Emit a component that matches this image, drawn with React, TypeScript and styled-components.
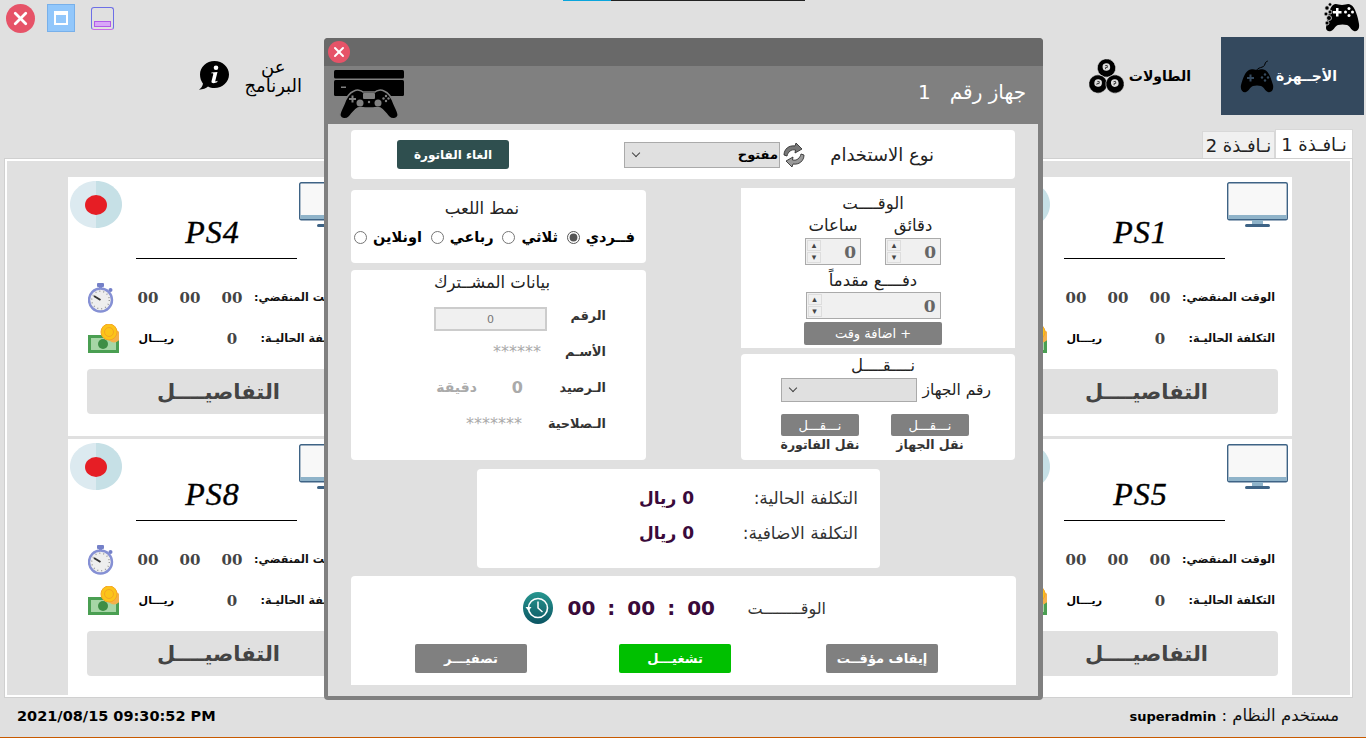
import React from 'react';
import styled, {createGlobalStyle} from "styled-components";
import {X} from "lucide-react";

const GlobalStyle = createGlobalStyle`
    html, body {
        margin: 0;
        padding: 0;
        overflow: hidden;
    }
    * {
        box-sizing: border-box;
    }
    body {
        font-family: "DejaVu Sans", sans-serif;
        color: #222;
    }
`

const PadPath = "M15 2C18 .5 22 1 24 3H36C38 1 42 .5 45 2C50 4 53 9 55 15C57 20 60 24 59 27C58 30 53 31 50 28C47 25 45 21 41 19C38 18 36 19 33 19H27C24 19 22 18 19 19C15 21 13 25 10 28C7 31 2 30 1 27C0 24 3 20 5 15C7 9 10 4 15 2Z"

const ConsoleIcon = () => (
    <svg width="70" height="50" viewBox="0 0 70 50">
        <rect x="0" y="0" width="70" height="8.5" rx="1.5" fill="#000"/>
        <rect x="0" y="10" width="70" height="16" rx="1.5" fill="#000"/>
        <rect x="7" y="16.5" width="5" height="1.5" fill="#808080"/>
        <g transform="translate(5 19)">
            <path d={PadPath} fill="#000" stroke="#808080" strokeWidth="1.5"/>
            <rect x="24" y="4" width="12" height="6" rx="1" fill="#808080"/>
            <path d="M10 9h2.500V6.500h2V9H17v2h-2.500v2.500h-2V11H10z" fill="#808080"/>
            <circle cx="21" cy="14" r="3.500" fill="#808080"/>
            <circle cx="39" cy="14" r="3.500" fill="#808080"/>
            <circle cx="30" cy="13" r="1.200" fill="#808080"/>
            <circle cx="47" cy="7" r="1.200" fill="#808080"/>
            <circle cx="47" cy="12" r="1.200" fill="#808080"/>
            <circle cx="44.500" cy="9.500" r="1.200" fill="#808080"/>
            <circle cx="49.500" cy="9.500" r="1.200" fill="#808080"/>
        </g>
    </svg>
)

const NavPadIcon = () => (
    <svg width="36" height="36" viewBox="0 0 36 36">
        <path d="M17 14c1-6 8-3 9-8 .3-1.600 1.200-2.500 2.800-3" fill="none" stroke="#000" strokeWidth="1"/>
        <path d="M10 12c3-1.500 5 0 8 0s5-1.500 8 0c4 2 6 8 8 15 1 5-2 8-5 7-3-1-4-5-7-6-2.500-.8-5.500-.8-8 0-3 1-4 5-7 6-3 1-6-2-5-7 2-7 4-13 8-15z" fill="#000"/>
        <path d="M8 19h2.500v-2.500h2v2.500H15v2h-2.500v2.500h-2V21H8z" fill="#34495e"/>
        <circle cx="26" cy="16.500" r="1.200" fill="#34495e"/>
        <circle cx="26" cy="22.500" r="1.200" fill="#34495e"/>
        <circle cx="23" cy="19.500" r="1.200" fill="#34495e"/>
        <circle cx="29" cy="19.500" r="1.200" fill="#34495e"/>
    </svg>
)

const LogoIcon = () => (
    <svg width="36" height="30" viewBox="0 0 36 30">
        <path d="M9 3c3-2 5 0 9 0s6-2 9 0c4 2 7 12 8 19 .8 5-2 8-5 7-3-1-4-5-7-6-3-.7-6-.7-9 0-3 1-4 5-7 6-3 1-5-1-5-3 1-8 3-20 7-23z" fill="#000"/>
        <path d="M14 10h3v-3h2.500v3h3v2.500h-3v3H17v-3h-3z" fill="#fff" transform="translate(-5 -1)"/>
        <circle cx="25" cy="6.500" r="1.500" fill="#fff"/>
        <circle cx="25" cy="13.500" r="1.500" fill="#fff"/>
        <circle cx="21.500" cy="10" r="1.500" fill="#fff"/>
        <circle cx="28.500" cy="10" r="1.500" fill="#fff"/>
        <g fill="#000" stroke="#e0e0e0" strokeWidth=".8">
            <circle cx="3" cy="6" r="2.200"/>
            <circle cx="6" cy="2.500" r="1.800"/>
            <circle cx="2" cy="12" r="2"/>
            <circle cx="5" cy="16" r="2.500"/>
            <circle cx="3" cy="21" r="2"/>
            <circle cx="6" cy="10" r="2"/>
        </g>
    </svg>
)

const balls = [
    {cx: 17.5, cy: 9, tilt: -8},
    {cx: 9, cy: 25, tilt: 8},
    {cx: 26, cy: 25, tilt: -12},
]

const BallsIcon = () => (
    <svg width="35" height="35" viewBox="0 0 35 35">
        {balls.map(({cx, cy, tilt}) => (
            <g key={cx} transform={`rotate(${tilt} ${cx} ${cy})`}>
                <circle cx={cx} cy={cy} r="9.200" fill="#000" stroke="#e0e0e0" strokeWidth=".6"/>
                <circle cx={cx} cy={cy - 1} r="3.800" fill="#ddd"/>
                <path d={`M${cx - 1} ${cy - 2.500}h2v2h-2v1.500`} fill="none" stroke="#222" strokeWidth=".8"/>
            </g>
        ))}
    </svg>
)

const InfoIcon = () => (
    <svg width="30" height="30" viewBox="0 0 30 30">
        <path d="M15.500 0C23.500 0 30 6 30 13.500S23.500 27 15.500 27c-2.500 0-4.500-.5-6.500-1.500-2 1.800-5 3-9 3.200 2-1.500 3.500-3.500 4-6C2 20 1 17 1 13.500 1 6 7.500 0 15.500 0z" fill="#000"/>
        <circle cx="17" cy="6.800" r="2.300" fill="#fff"/>
        <path d="M12.500 11.500l6-.6-2.200 8.800c-.2 1 .5 1 2.200 0l-.2 1.300c-2 1.400-6.300 2-5.800-.8l1.700-6.800c.2-1-.3-1.200-1.900-1z" fill="#fff"/>
    </svg>
)

const MonitorIcon = () => (
    <svg width="61" height="46" viewBox="0 0 61 46">
        <rect x=".7" y=".7" width="59.600" height="37" rx="1.500" fill="#f8f8f8" stroke="#3e6385" strokeWidth="1.400"/>
        <rect x="1.400" y="33" width="58.200" height="4" fill="#8fb3c9"/>
        <rect x="25" y="38" width="11" height="4" fill="#8fb3c9"/>
        <rect x="18" y="42" width="25" height="3" rx="1.500" fill="#3e6385"/>
    </svg>
)

const StatusIcon = () => (
    <svg width="52" height="47" viewBox="0 0 52 47">
        <path d="M26 0C11.600 0 0 10.500 0 23.500S11.600 47 26 47z" fill="#dceaf0"/>
        <path d="M26 0c14.400 0 26 10.500 26 23.500S40.400 47 26 47z" fill="#c6e0e6"/>
        <ellipse cx="26" cy="24" rx="11" ry="10" fill="#e61e25"/>
    </svg>
)

const WatchIcon = () => (
    <svg width="26" height="30" viewBox="0 0 26 30">
        <rect x="9" y="0" width="7" height="4" rx="1" fill="#7480c8"/>
        <rect x="11" y="3" width="3" height="3" fill="#7480c8"/>
        <circle cx="22.500" cy="7" r="2" fill="#7480c8"/>
        <circle cx="12.500" cy="17" r="11.500" fill="#eee" stroke="#8590d4" strokeWidth="2.400"/>
        <circle cx="12.500" cy="17" r="8.800" fill="none" stroke="#999" strokeWidth="1.400" strokeDasharray="1 3"/>
        <path d="M12.500 17L6 13" stroke="#333" strokeWidth="2"/>
    </svg>
)

const MoneyIcon = () => (
    <svg width="31" height="30" viewBox="0 0 31 30">
        <rect x="0" y="11" width="31" height="18" fill="#4a9f52"/>
        <rect x="3" y="14" width="25" height="12" fill="#a6d6a6"/>
        <circle cx="15" cy="20" r="5" fill="#3e8e46"/>
        <circle cx="26" cy="12" r="6.500" fill="#f4b04a"/>
        <circle cx="21" cy="8" r="8" fill="#fcc419" stroke="#f5a623"/>
        <circle cx="21" cy="8" r="4.500" fill="none" stroke="#f5a623"/>
    </svg>
)

const ClockIcon = () => (
    <svg width="30" height="32" viewBox="0 0 30 32">
        <defs>
            <linearGradient id="clockFill" x1="0" y1="0" x2="0" y2="1">
                <stop offset="0" stopColor="#27968f"/>
                <stop offset="1" stopColor="#0b5563"/>
            </linearGradient>
        </defs>
        <ellipse cx="15" cy="16" rx="15" ry="16" fill="url(#clockFill)"/>
        <circle cx="15" cy="16" r="9.500" fill="none" stroke="#fff" strokeWidth="1.600"/>
        <path d="M15 9.500V16l4.500 4" fill="none" stroke="#fff" strokeWidth="1.500"/>
        <path d="M2.500 15l3 4 3-4z" fill="#fff"/>
    </svg>
)

const SyncIcon = () => (
    <svg width="24" height="26" viewBox="0 0 24 26">
        <path d="M2 13C2 7 7 3 13 4l1-3 6 6-7 4 .5-3C9 7 6 10 5 14z" fill="#777" stroke="#333" strokeWidth=".9"/>
        <path d="M22 13c0 6-5 10-11 9l-1 3-6-6 7-4-.5 3c4.500 1 7.500-2 8.500-6z" fill="#999" stroke="#333" strokeWidth=".9"/>
    </svg>
)

const Spinner = ({value, wide}: {value: string, wide?: boolean}) => (
    <StyledSpinner $wide={wide}>
        <SpinnerValue>{value}</SpinnerValue>
        <SpinnerArrows>
            <SpinnerArrow>▴</SpinnerArrow>
            <SpinnerArrow>▾</SpinnerArrow>
        </SpinnerArrows>
    </StyledSpinner>
)

const DeviceCard = ({name}: {name: string}) => (
    <StyledCard>
        <StatusBadge><StatusIcon/></StatusBadge>
        <MonitorBadge><MonitorIcon/></MonitorBadge>
        <CardTitle dir="ltr">{name}</CardTitle>
        <CardRow>
            <CardLabel>الوقت المنقضي:</CardLabel>
            <CardValue>00</CardValue>
            <CardValue>00</CardValue>
            <CardValue>00</CardValue>
            <CardIcon><WatchIcon/></CardIcon>
        </CardRow>
        <CardRow>
            <CardLabel>التكلفة الحاليـة:</CardLabel>
            <CardValue>0</CardValue>
            <CardCurrency>ريـــال</CardCurrency>
            <CardIcon><MoneyIcon/></CardIcon>
        </CardRow>
        <DetailsButton>التفاصيــــل</DetailsButton>
    </StyledCard>
)

const modes = ['فــردي', 'ثلاثي', 'رباعي', 'اونلاين']
const devices = ['PS1', 'PS2', 'PS3', 'PS4', 'PS5', 'PS6', 'PS7', 'PS8']

export default function App() {
    return (
        <StyledApp dir="rtl">
            <GlobalStyle/>
            <TopStrip dir="ltr">
                <StripPart $color="#0aa5dc" $width={48}/>
                <StripPart $color="#222" $width={194}/>
            </TopStrip>

            <TitleBar>
                <LogoIcon/>
                <WindowButtons>
                    <CloseButton $size={29}><X size={21} strokeWidth={3.2} color="#fff"/></CloseButton>
                    <MaximizeButton/>
                    <MinimizeButton/>
                </WindowButtons>
            </TitleBar>

            <NavBar>
                <NavItem $active>
                    <span>الأجــهزة</span>
                    <NavPadIcon/>
                </NavItem>
                <NavItem>
                    <span>الطاولات</span>
                    <BallsIcon/>
                </NavItem>
                <AboutItem>
                    <span>عن<br/>البرنامج</span>
                    <InfoIcon/>
                </AboutItem>
            </NavBar>

            <TabRow>
                <Tab $active>نـافـذة 1</Tab>
                <Tab>نـافـذة 2</Tab>
            </TabRow>

            <TabPanel>
                <CardGrid>
                    {devices.map(name => <DeviceCard key={name} name={name}/>)}
                </CardGrid>
            </TabPanel>

            <Footer>
                <UserName>مستخدم النظام : <b>superadmin</b></UserName>
                <DateText dir="ltr">2021/08/15 09:30:52 PM</DateText>
            </Footer>

            <Modal>
                <ModalTitleBar>
                    <CloseButton $size={22}><X size={16} strokeWidth={3} color="#fff"/></CloseButton>
                </ModalTitleBar>
                <ModalHeader>
                    <span>جهاز رقم &nbsp; 1</span>
                    <ConsoleIcon/>
                </ModalHeader>
                <ModalBody>
                    <UsageSection>
                        <SectionLabel>نوع الاستخدام</SectionLabel>
                        <SyncIcon/>
                        <UsageSelectBox>
                            <FormSelect defaultValue="open">
                                <option value="open">مفتوح</option>
                            </FormSelect>
                        </UsageSelectBox>
                        <CancelButton>الغاء الفاتورة</CancelButton>
                    </UsageSection>

                    <MiddleGrid>
                        <Column $gap={6}>
                            <TimeSection>
                                <SectionTitle>الوقــــت</SectionTitle>
                                <TimeFields>
                                    <TimeField>
                                        <SectionTitle>دقائق</SectionTitle>
                                        <Spinner value="0"/>
                                    </TimeField>
                                    <TimeField>
                                        <SectionTitle>ساعات</SectionTitle>
                                        <Spinner value="0"/>
                                    </TimeField>
                                </TimeFields>
                                <PrepayTitle>دفــــع مقدماً</PrepayTitle>
                                <Spinner value="0" wide/>
                                <AddTimeButton>+ اضافة وقت</AddTimeButton>
                            </TimeSection>
                            <TransferSection>
                                <SectionTitle>نــــقــــل</SectionTitle>
                                <TransferRow>
                                    <TransferLabel>رقم الجهاز</TransferLabel>
                                    <TransferSelectBox>
                                        <FormSelect/>
                                    </TransferSelectBox>
                                </TransferRow>
                                <TransferActions>
                                    <TransferAction>
                                        <TransferButton>نـــقـــل</TransferButton>
                                        <TransferCaption>نقل الجهاز</TransferCaption>
                                    </TransferAction>
                                    <TransferAction>
                                        <TransferButton>نـــقـــل</TransferButton>
                                        <TransferCaption>نقل الفاتورة</TransferCaption>
                                    </TransferAction>
                                </TransferActions>
                            </TransferSection>
                        </Column>

                        <Column $gap={7} $top={2}>
                            <ModeSection>
                                <ModeTitle>نمط اللعب</ModeTitle>
                                <ModeRow>
                                    {modes.map((mode, i) => (
                                        <ModeOption key={mode}>
                                            <span>{mode}</span>
                                            <ModeRadio type="radio" name="mode" defaultChecked={i === 0}/>
                                        </ModeOption>
                                    ))}
                                </ModeRow>
                            </ModeSection>
                            <MemberSection>
                                <MemberTitle>بيانات المشــترك</MemberTitle>
                                <MemberRow>
                                    <MemberLabel>الرقم</MemberLabel>
                                    <MemberNumber>0</MemberNumber>
                                </MemberRow>
                                <MemberRow>
                                    <MemberLabel>الأسـم</MemberLabel>
                                    <MemberMuted $inset={6}>******</MemberMuted>
                                </MemberRow>
                                <MemberRow>
                                    <MemberLabel>الـرصيد</MemberLabel>
                                    <MemberMuted $inset={24}>
                                        <b>0</b>
                                        <MemberUnit>دقيقة</MemberUnit>
                                    </MemberMuted>
                                </MemberRow>
                                <MemberRow>
                                    <MemberLabel>الـصلاحية</MemberLabel>
                                    <MemberMuted $inset={25}>*******</MemberMuted>
                                </MemberRow>
                            </MemberSection>
                        </Column>
                    </MiddleGrid>

                    <CostSection>
                        <CostRow>
                            <CostLabel>التكلفة الحالية:</CostLabel>
                            <CostValue>0 ريال</CostValue>
                        </CostRow>
                        <CostRow>
                            <CostLabel>التكلفة الاضافية:</CostLabel>
                            <CostValue>0 ريال</CostValue>
                        </CostRow>
                    </CostSection>

                    <TimerSection>
                        <TimerRow>
                            <TimerLabel>الوقــــــــت</TimerLabel>
                            <TimerDigits dir="ltr">
                                <span>00</span><span>:</span><span>00</span><span>:</span><span>00</span>
                            </TimerDigits>
                            <ClockIcon/>
                        </TimerRow>
                        <TimerActions>
                            <TimerButton>إيقاف مؤقــت</TimerButton>
                            <TimerButton $start>تشغيـــل</TimerButton>
                            <TimerButton>تصفيـــر</TimerButton>
                        </TimerActions>
                    </TimerSection>
                </ModalBody>
            </Modal>
        </StyledApp>
    );
}

const StyledApp = styled.div`
    position: relative;
    width: 1366px;
    height: 738px;
    display: flex;
    flex-direction: column;
    background-color: #e0e0e0;
    border-bottom: 1px solid #c85a00;
    overflow: hidden;
`
const TopStrip = styled.div`
    position: absolute;
    top: 0;
    left: 563px;
    display: flex;
`
const StripPart = styled.div<{$color: string, $width: number}>`
    width: ${props => props.$width}px;
    height: 1px;
    background-color: ${props => props.$color};
`
const TitleBar = styled.div`
    height: 37px;
    flex: none;
    display: flex;
    align-items: flex-start;
    justify-content: space-between;
    padding: 2px 6px 0 6px;
`
const WindowButtons = styled.div`
    display: flex;
    flex-direction: row-reverse;
    align-items: flex-start;
    padding-top: 2px;
`
const CloseButton = styled.div<{$size: number}>`
    width: ${props => props.$size}px;
    height: ${props => props.$size}px;
    flex: none;
    border-radius: 50%;
    background-color: #e65368;
    display: flex;
    align-items: center;
    justify-content: center;
`
const MaximizeButton = styled.div`
    width: 28px;
    height: 28px;
    margin-left: 12px;
    background-color: #92c7fb;
    border: 1px solid #78b0ea;
    display: flex;
    &::after {
        content: "";
        margin: 6px;
        flex: 1;
        border: 2px solid #fff;
        border-top-width: 4px;
    }
`
const MinimizeButton = styled.div`
    width: 23px;
    height: 23px;
    margin: 3px 0 0 16px;
    border: 1px solid #6d6fe6;
    border-bottom-color: #c96be8;
    border-radius: 3px;
    display: flex;
    align-items: flex-end;
    padding: 0 2px 2px;
    &::after {
        content: "";
        flex: 1;
        height: 4px;
        background-color: #d9a6f8;
        border: 1px solid #b05be8;
    }
`
const NavBar = styled.div`
    height: 78px;
    flex: none;
    display: flex;
    padding: 0 2px 0 188px;
`
const NavItem = styled.div<{$active?: boolean}>`
    width: 143px;
    display: flex;
    align-items: center;
    padding-inline-start: ${props => props.$active ? '27px' : '30px'};
    gap: ${props => props.$active ? '1px' : '5px'};
    background-color: ${props => props.$active ? '#34495e' : 'transparent'};
    color: ${props => props.$active ? '#fff' : '#000'};
    font-size: 14px;
    font-weight: bold;
    white-space: nowrap;
`
const AboutItem = styled(NavItem)`
    margin-inline-start: auto;
    padding-inline-start: 29px;
    gap: 15px;
    line-height: 19px;
    text-align: center;
    font-size: 18px;
    font-weight: normal;
    color: #000;
`
const TabRow = styled.div`
    height: 30px;
    margin-top: 14px;
    flex: none;
    display: flex;
    align-items: flex-end;
    padding-inline-start: 13px;
`
const Tab = styled.div<{$active?: boolean}>`
    height: ${props => props.$active ? '30px' : '28px'};
    width: ${props => props.$active ? '78px' : '73px'};
    background-color: ${props => props.$active ? '#fff' : '#f0f0f0'};
    border: 1px solid #d8d8d8;
    border-bottom: none;
    display: flex;
    align-items: center;
    justify-content: center;
    font-size: 18px;
    white-space: nowrap;
`
const TabPanel = styled.div`
    height: 538px;
    flex: none;
    margin: 0 14px 0 5px;
    padding: 16px 58px 0 0;
    border: 2px solid #fff;
    outline: 1px solid #d0d0d0;
    overflow: hidden;
`
const CardGrid = styled.div`
    display: grid;
    grid-template-columns: repeat(4, 296px);
    grid-auto-rows: 259px;
    column-gap: 13.33px;
    row-gap: 3px;
`
const StyledCard = styled.div`
    position: relative;
    background-color: #fff;
    padding-top: 37px;
`
const StatusBadge = styled.div`
    position: absolute;
    top: 4px;
    left: 2px;
    line-height: 0;
`
const MonitorBadge = styled.div`
    position: absolute;
    top: 5px;
    right: 4px;
    line-height: 0;
`
const CardTitle = styled.div`
    width: 161px;
    height: 45px;
    margin: 0 auto 18px;
    padding-right: 7px;
    border-bottom: 1px solid #000;
    font-family: "Liberation Serif", serif;
    font-style: italic;
    font-size: 32px;
    line-height: 36px;
    letter-spacing: 1px;
    text-align: center;
    color: #000;
    -webkit-text-stroke: .4px #000;
`
const CardRow = styled.div`
    height: 41px;
    padding: 0 17px 0 20px;
    display: grid;
    grid-template-columns: 94px 42px 42px 42px 1fr;
    align-items: center;
`
const CardLabel = styled.div`
    font-size: 11.2px;
    font-weight: bold;
    color: #111;
    white-space: nowrap;
`
const CardValue = styled.div`
    font-family: "DejaVu Serif", serif;
    font-weight: bold;
    font-size: 15px;
    text-align: center;
    color: #444;
`
const CardCurrency = styled.div`
    grid-column: span 2;
    padding-inline-start: 37px;
    font-size: 11px;
    font-weight: bold;
    color: #000;
`
const CardIcon = styled.div`
    justify-self: end;
    line-height: 0;
`
const DetailsButton = styled.div`
    width: 263px;
    height: 45px;
    margin: 10px 14px 0 19px;
    border-radius: 4px;
    background-color: #e0e0e0;
    display: flex;
    align-items: center;
    justify-content: center;
    font-size: 21px;
    font-weight: bold;
    color: #444;
`
const Footer = styled.div`
    height: 40px;
    flex: none;
    display: flex;
    align-items: center;
    justify-content: space-between;
    padding: 0 27px 3px 17px;
`
const UserName = styled.div`
    font-size: 16.5px;
    color: #111;
    & b {
        font-size: 13px;
        color: #000;
    }
`
const DateText = styled.div`
    font-size: 14.5px;
    font-weight: bold;
    color: #000;
`
const Modal = styled.div`
    position: absolute;
    left: 324px;
    top: 38px;
    width: 719px;
    height: 662px;
    display: flex;
    flex-direction: column;
    border-radius: 4px;
    overflow: hidden;
    background-color: #808080;
`
const ModalTitleBar = styled.div`
    height: 28px;
    flex: none;
    display: flex;
    align-items: center;
    justify-content: flex-end;
    padding-left: 4px;
    background-color: #696969;
`
const ModalHeader = styled.div`
    height: 58px;
    flex: none;
    display: flex;
    align-items: center;
    justify-content: space-between;
    padding: 0 17px 0 0;
    font-size: 20px;
    color: #fff;
    & span {
        margin-bottom: 6px;
    }
    & svg {
        margin-left: 10px;
    }
`
const ModalBody = styled.div`
    flex: 1;
    margin: 0 5px 4px 4px;
    padding: 6px 23px 0;
    display: flex;
    flex-direction: column;
    background-color: #e0e0e0;
`
const Section = styled.div`
    background-color: #fff;
    border-radius: 4px;
`
const UsageSection = styled(Section)`
    height: 49px;
    flex: none;
    display: flex;
    align-items: center;
    padding-inline-start: 81px;
`
const SectionLabel = styled.div`
    width: 105px;
    margin-inline-end: 23px;
    font-size: 18px;
    white-space: nowrap;
    color: #222;
`
const SelectBox = styled.div`
    position: relative;
    flex: none;
    &::after {
        content: "";
        position: absolute;
        left: 9px;
        top: 50%;
        width: 5px;
        height: 5px;
        margin-top: -5px;
        border-right: 1px solid #444;
        border-bottom: 1px solid #444;
        transform: rotate(45deg);
        pointer-events: none;
    }
`
const UsageSelectBox = styled(SelectBox)`
    width: 156px;
    height: 26px;
    margin: 0 2px 0 115px;
`
const TransferSelectBox = styled(SelectBox)`
    width: 136px;
    height: 24px;
`
const FormSelect = styled.select`
    display: block;
    width: 100%;
    height: 100%;
    padding: 0 1px;
    appearance: none;
    border-radius: 0;
    background-color: #e0e0e0;
    border: 1px solid #aaa;
    font-family: inherit;
    font-size: 13px;
    font-weight: bold;
    color: #000;
`
const CancelButton = styled.div`
    width: 112px;
    height: 29px;
    border-radius: 3px;
    background-color: #2f4f4f;
    color: #fff;
    font-size: 12px;
    font-weight: bold;
    display: flex;
    align-items: center;
    justify-content: center;
`
const MiddleGrid = styled.div`
    height: 272px;
    margin-top: 9px;
    flex: none;
    display: grid;
    grid-template-columns: 274px 295px;
    column-gap: 95px;
`
const Column = styled.div<{$gap: number, $top?: number}>`
    display: flex;
    flex-direction: column;
    gap: ${props => props.$gap}px;
    padding-top: ${props => props.$top || 0}px;
`
const SectionTitle = styled.div`
    height: 20px;
    font-size: 16.5px;
    line-height: 20px;
    text-align: center;
    color: #222;
    white-space: nowrap;
`
const TimeSection = styled.div`
    height: 160px;
    padding: 6px 10px 0 0;
    background-color: #fff;
    display: flex;
    flex-direction: column;
    align-items: center;
`
const TimeFields = styled.div`
    margin-top: 2px;
    display: flex;
    gap: 24px;
`
const TimeField = styled.div`
    width: 56px;
    display: flex;
    flex-direction: column;
    align-items: center;
    gap: 2px;
`
const PrepayTitle = styled(SectionTitle)`
    margin: 6px 0 1px;
`
const StyledSpinner = styled.div<{$wide?: boolean}>`
    width: ${props => props.$wide ? '135px' : '56px'};
    height: 27px;
    flex: none;
    padding: 1px;
    display: flex;
    align-items: center;
    justify-content: space-between;
    background-color: #f0f0f0;
    border: 1px solid #aaa;
`
const SpinnerValue = styled.div`
    padding: 0 3px;
    font-family: "DejaVu Serif", serif;
    font-weight: bold;
    font-size: 17px;
    color: #666;
`
const SpinnerArrows = styled.div`
    display: flex;
    flex-direction: column;
    gap: 1px;
`
const SpinnerArrow = styled.div`
    width: 14px;
    height: 11px;
    border: 1px solid #ddd;
    font-size: 9px;
    line-height: 9px;
    text-align: center;
    color: #444;
`
const AddTimeButton = styled.div`
    width: 138px;
    height: 23px;
    margin-top: 3px;
    border-radius: 2px;
    background-color: #808080;
    color: #fff;
    font-size: 13px;
    display: flex;
    align-items: center;
    justify-content: center;
`
const TransferSection = styled(Section)`
    height: 106px;
    padding: 2px 0 0 10px;
`
const TransferRow = styled.div`
    height: 24px;
    margin-top: 2px;
    padding-inline-start: 24px;
    display: flex;
    align-items: center;
`
const TransferLabel = styled.div`
    width: 74px;
    font-size: 15.5px;
    color: #222;
    white-space: nowrap;
`
const TransferActions = styled.div`
    margin-top: 12px;
    padding-inline-start: 46px;
    display: flex;
    gap: 32px;
`
const TransferAction = styled.div`
    width: 78px;
    display: flex;
    flex-direction: column;
    align-items: center;
`
const TransferButton = styled.div`
    width: 78px;
    height: 22px;
    border-radius: 2px;
    background-color: #808080;
    color: #fff;
    font-size: 13px;
    display: flex;
    align-items: center;
    justify-content: center;
`
const TransferCaption = styled.div`
    height: 18px;
    line-height: 18px;
    font-size: 12.5px;
    font-weight: bold;
    color: #333;
    white-space: nowrap;
`
const ModeSection = styled(Section)`
    height: 73px;
    padding-top: 9px;
`
const ModeTitle = styled(SectionTitle)`
    padding-inline-start: 33px;
`
const ModeRow = styled.div`
    height: 18px;
    margin-top: 9px;
    padding: 0 11px 0 3px;
    display: flex;
    align-items: center;
    justify-content: space-between;
`
const ModeOption = styled.label`
    display: flex;
    align-items: center;
    gap: 6px;
    font-size: 14.5px;
    font-weight: bold;
    color: #000;
`
const ModeRadio = styled.input`
    width: 13px;
    height: 13px;
    margin: 0;
    accent-color: #555;
`
const MemberSection = styled(Section)`
    height: 190px;
    padding-top: 3px;
`
const MemberTitle = styled(SectionTitle)`
    padding-inline-start: 13px;
    margin-bottom: 4px;
`
const MemberRow = styled.div`
    height: 36px;
    padding-inline-start: 40px;
    display: grid;
    grid-template-columns: 59px 113px;
    align-items: center;
`
const MemberLabel = styled.div`
    font-size: 12.8px;
    font-weight: bold;
    color: #333;
    white-space: nowrap;
`
const MemberNumber = styled.div`
    height: 24px;
    margin-top: 8px;
    background-color: #f0f0f0;
    border: 2px solid #ccc;
    color: #777;
    font-size: 11px;
    display: flex;
    align-items: center;
    justify-content: center;
`
const MemberMuted = styled.div<{$inset: number}>`
    padding-inline-start: ${props => props.$inset}px;
    display: flex;
    align-items: center;
    gap: 35px;
    font-size: 16px;
    color: #aaa;
    white-space: nowrap;
`
const MemberUnit = styled.span`
    font-size: 14px;
    font-weight: bold;
`
const CostSection = styled(Section)`
    width: 403px;
    height: 99px;
    margin: 9px 135px 0 auto;
    flex: none;
    padding: 11px 22px 0 0;
`
const CostRow = styled.div`
    height: 35px;
    display: flex;
    align-items: center;
`
const CostLabel = styled.div`
    width: 164px;
    font-size: 17px;
    color: #333;
    white-space: nowrap;
`
const CostValue = styled.div`
    font-size: 17px;
    font-weight: bold;
    color: #3a0a3a;
`
const TimerSection = styled(Section)`
    height: 109px;
    margin: 8px -1px 0 0;
    flex: none;
    padding-top: 17px;
    border-radius: 4px 4px 0 0;
`
const TimerRow = styled.div`
    height: 30px;
    padding-inline-start: 190px;
    display: flex;
    align-items: center;
`
const TimerLabel = styled.div`
    width: 78px;
    margin-inline-end: 33px;
    font-size: 16px;
    color: #333;
    white-space: nowrap;
`
const TimerDigits = styled.div`
    display: flex;
    gap: 12px;
    margin-left: 14px;
    font-size: 20px;
    font-weight: bold;
    color: #3a0a3a;
`
const TimerActions = styled.div`
    margin-top: 21px;
    padding: 0 78px 0 64px;
    display: flex;
    justify-content: space-between;
`
const TimerButton = styled.div<{$start?: boolean}>`
    width: 112px;
    height: 29px;
    margin-right: ${props => props.$start ? '3px' : '0'};
    border-radius: 2px;
    background-color: ${props => props.$start ? '#00c000' : '#808080'};
    color: #fff;
    font-size: 13px;
    font-weight: bold;
    display: flex;
    align-items: center;
    justify-content: center;
`
